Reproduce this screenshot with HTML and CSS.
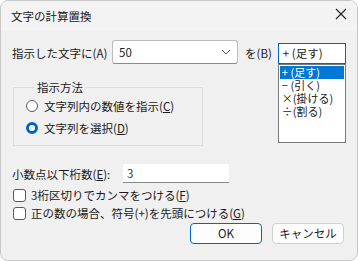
FILE: index.html
```html
<!DOCTYPE html>
<html lang="ja">
<head>
    <meta charset="UTF-8">
    <title>文字の計算置換</title>
    <link rel="stylesheet" href="styles.css">
</head>
<body>
    <div class="window">
        <div class="titlebar">
            <span class="title">文字の計算置換</span>
            <span class="close">
                <svg width="12" height="12" viewBox="0 0 12 12"><path d="M1 1 L11 11 M11 1 L1 11" stroke="#222" stroke-width="1.1" fill="none"/></svg>
            </span>
        </div>
        <div class="content">
            <div class="row1">
                <span class="lbl-a">指示した文字に(A)</span>
                <div class="combo">
                    <span>50</span>
                    <svg width="10" height="6" viewBox="0 0 10 6"><path d="M1 1 L5 5 L9 1" stroke="#555" stroke-width="1" fill="none"/></svg>
                </div>
                <span class="lbl-b">を(B)</span>
                <div class="combo2">
                    <span>+ (足す)</span>
                    <ul class="droplist">
                        <li class="sel">+ (足す)</li>
                        <li>− (引く)</li>
                        <li>×(掛ける)</li>
                        <li>÷(割る)</li>
                    </ul>
                </div>
            </div>

            <fieldset class="group">
                <legend>指示方法</legend>
                <div class="radio"><span class="rb"></span>文字列内の数値を指示(<u>C</u>)</div>
                <div class="radio"><span class="rb on"></span>文字列を選択(<u>D</u>)</div>
            </fieldset>

            <div class="row-dec">
                <span class="lbl-e">小数点以下桁数(<u>E</u>):</span>
                <div class="edit">3</div>
            </div>

            <div class="check"><span class="cb"></span>3桁区切りでカンマをつける(<u>F</u>)</div>
            <div class="check"><span class="cb"></span>正の数の場合、符号(+)を先頭につける(<u>G</u>)</div>

            <div class="buttons">
                <div class="btn ok">OK</div>
                <div class="btn">キャンセル</div>
            </div>
        </div>
    </div>
</body>
</html>
```

FILE: styles.css
```css
* {
    padding: 0;
    margin: 0;
    box-sizing: border-box;
}
body {
    width: 358px;
    height: 261px;
    background-color: #fff;
    font-family: "Noto Sans CJK JP", "Noto Sans", sans-serif;
    font-size: 11.5px;
    color: #1a1a1a;
    white-space: nowrap;
}
.window {
    width: 358px;
    height: 261px;
    border: 1px solid #c8c8c8;
    border-radius: 8px;
    background-color: #f0f0f0;
    overflow: hidden;
}
.titlebar {
    height: 30px;
    display: flex;
    align-items: center;
    justify-content: space-between;
    padding-left: 10px;
    padding-right: 10px;
    background-color: #f3f3f3;
}
.close {
    display: flex;
    margin-top: -4px;
}
.content {
    padding: 9px 12px 0 11px;
}
.row1 {
    display: flex;
    align-items: center;
    height: 24px;
}
.row1 > * {
    flex-shrink: 0;
}
.lbl-a {
    width: 100px;
    margin-top: 1px;
}
.combo {
    width: 126px;
    height: 24px;
    background-color: #fff;
    border: 1px solid #bcbcbc;
    border-bottom-color: #8a8a8a;
    border-radius: 3px;
    display: flex;
    align-items: center;
    justify-content: space-between;
    padding: 0 6px 0 6px;
}
.lbl-b {
    margin-left: 7px;
    margin-top: 1px;
}
.combo2 {
    margin-left: 6px;
    width: 68px;
    height: 21px;
    margin-top: 3px;
    background-color: #fff;
    border: 1px solid #0067c0;
    padding-left: 4px;
    line-height: 19px;
    position: relative; /* 下拉列表的定位基准 */
}
.droplist {
    list-style: none;
    position: absolute;
    left: -1px;
    top: 20px;
    width: 68px;
    height: 79px;
    background-color: #fff;
    border: 1px solid #7a7a7a;
    padding: 1px;
    z-index: 3;
    font-size: 11px;
}
.droplist li {
    height: 13px;
    line-height: 13px;
    padding-left: 2px;
}
.droplist li.sel {
    background-color: #0078d7;
    color: #fff;
}
.group {
    width: 190px;
    height: 67px;
    margin-top: 15px;
    margin-left: 1px;
    border: 1px solid #dcdcdc;
    padding: 0 0 0 12px;
}
.group legend {
    padding: 0 3px;
    margin-left: 8px;
}
.radio {
    display: flex;
    align-items: center;
    height: 22px;
}
.rb {
    width: 12px;
    height: 12px;
    border: 1px solid #5a5a5a;
    border-radius: 50%;
    background-color: #fff;
    margin-right: 6px;
}
.rb.on {
    border: 3px solid #0067c0;
    background-color: #fff;
}
.row-dec {
    display: flex;
    align-items: center;
    margin-top: 18px;
    height: 19px;
}
.lbl-e {
    width: 111px;
}
.edit {
    width: 106px;
    height: 19px;
    background-color: #fff;
    border-bottom: 1px solid #8a8a8a;
    padding-left: 4px;
    line-height: 18px;
    color: #333;
}
.check {
    display: flex;
    align-items: center;
    height: 18px;
    margin-top: 3px;
}
.check + .check {
    margin-top: 0;
}
.cb {
    width: 13px;
    height: 13px;
    border: 1px solid #5a5a5a;
    border-radius: 3px;
    background-color: #fff;
    margin-left: 1px;
    margin-right: 5px;
}
.buttons {
    display: flex;
    justify-content: flex-end;
    gap: 10px;
    margin-top: 1px;
    padding-right: 1px;
}
.btn {
    width: 72px;
    height: 21px;
    background-color: #fdfdfd;
    border: 1px solid #cfcfcf;
    border-radius: 4px;
    text-align: center;
    line-height: 19px;
}
.btn.ok {
    border: 1px solid #0067c0;
}
```
